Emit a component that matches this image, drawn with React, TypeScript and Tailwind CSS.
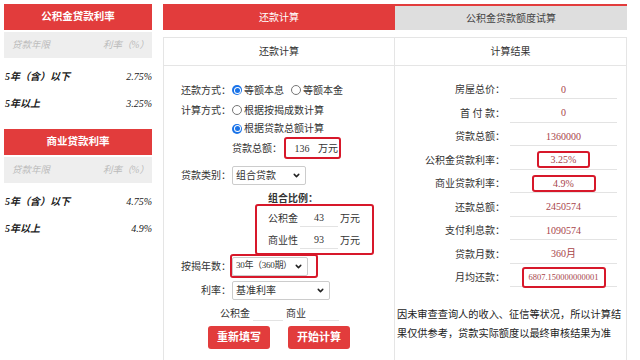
import React, {ReactNode} from 'react';
import {ChevronDown} from 'lucide-react';

const font = {fontFamily: '"Liberation Serif", "Noto Sans CJK SC", serif'};

function Radio({checked}: {checked?: boolean}) {
  return checked ? (
    <span className="flex h-[10px] w-[10px] shrink-0 items-center justify-center rounded-full bg-[#1a73e8]">
      <span className="flex h-[7px] w-[7px] items-center justify-center rounded-full bg-white">
        <span className="h-[5px] w-[5px] rounded-full bg-[#1a73e8]" />
      </span>
    </span>
  ) : (
    <span className="h-[10px] w-[10px] shrink-0 rounded-full border border-[#767676] bg-white" />
  );
}

function Select({width, children}: {width: string; children: ReactNode}) {
  return (
    <div
      className={`flex h-[19px] items-center justify-between whitespace-nowrap rounded-[2px] border border-[#cccccc] bg-white pl-[3px] pr-[4px] ${width}`}
    >
      <span>{children}</span>
      <ChevronDown size={9} strokeWidth={4} className="shrink-0 text-[#222]" />
    </div>
  );
}

function RateBlock({title, rows}: {title: string; rows: [string, string][]}) {
  return (
    <div>
      <div className="flex h-[26px] items-center justify-center bg-[#e23c3c] text-[10.5px] font-bold text-white">
        {title}
      </div>
      <div className="mt-[2px] flex h-[26px] items-center justify-between bg-[#eeeeee] pl-[8px] pr-[3px] text-[9.5px] italic text-[#bbbbbb]">
        <span>贷款年限</span>
        <span>利率（%）</span>
      </div>
      <div className="mt-[5px]">
        {rows.map(([k, v]) => (
          <div key={k} className="flex h-[27px] items-center justify-between pl-[1px] text-[10px] italic text-[#222]">
            <span className="font-semibold">{k}</span>
            <span>{v}</span>
          </div>
        ))}
      </div>
    </div>
  );
}

function ResultRow({label, value, boxW, small}: {label: string; value: string; boxW?: string; small?: boolean}) {
  return (
    <div className="flex h-[23.5px] items-center">
      <div className="w-[110px] text-right text-[#333]">{label}</div>
      <div className="ml-[5px] flex h-[19px] w-[107px] items-center justify-center border-b border-[#e3e3e3] text-[#a8444a]">
        {boxW ? (
          <div
            className={`flex h-[17px] items-center justify-center rounded-[3px] border-2 border-[#d7182a] ${boxW} ${small ? 'h-[21px] text-[8.5px]' : ''}`}
          >
            {value}
          </div>
        ) : (
          value
        )}
      </div>
    </div>
  );
}

export default function App() {
  return (
    <div className="flex h-[360px] w-[640px] gap-[11px] overflow-hidden bg-white px-[4px] pt-[4px]" style={font}>
      <div className="w-[148px] shrink-0">
        <RateBlock title="公积金贷款利率" rows={[['5年（含）以下', '2.75%'], ['5年以上', '3.25%']]} />
        <div className="mt-[12px]">
          <RateBlock title="商业贷款利率" rows={[['5年（含）以下', '4.75%'], ['5年以上', '4.9%']]} />
        </div>
      </div>

      <div className="w-[464px] shrink-0 text-[10px] text-[#333]">
        <div className="flex h-[26px]">
          <div className="flex w-[232px] items-center justify-center bg-[#e23c3c] text-white">还款计算</div>
          <div className="flex w-[232px] items-center justify-center border-t-2 border-[#e23c3c] bg-[#dedede] text-[#444]">
            公积金贷款额度试算
          </div>
        </div>

        <div className="mt-[7px] flex">
          <div className="h-[330px] w-[232px] border border-[#e5e5e5]">
            <div className="flex h-[28px] items-center justify-center border-b border-[#e5e5e5]">还款计算</div>
            <div className="pt-[14px]">
              <div className="flex h-[20px] items-center">
                <span className="w-[67px] text-right">还款方式：</span>
                <span className="ml-[1px] flex items-center gap-[2px]">
                  <Radio checked />
                  等额本息
                </span>
                <span className="ml-[7px] flex items-center gap-[2px]">
                  <Radio />
                  等额本金
                </span>
              </div>
              <div className="flex h-[20px] items-center">
                <span className="w-[67px] text-right">计算方式：</span>
                <span className="ml-[1px] flex items-center gap-[2px]">
                  <Radio />
                  根据按揭成数计算
                </span>
              </div>
              <div className="flex h-[17px] items-center pl-[68px]">
                <span className="flex items-center gap-[2px]">
                  <Radio checked />
                  根据贷款总额计算
                </span>
              </div>
              <div className="flex h-[22px] items-center pl-[68px]">
                <span>贷款总额：</span>
                <div className="ml-[2px] flex h-[22px] w-[57px] items-center rounded-[3px] border-2 border-[#d7182a]">
                  <span className="w-[32px] text-center">136</span>
                  <span>万元</span>
                </div>
              </div>
              <div className="mt-[7px] flex h-[19px] items-center">
                <span className="w-[67px] text-right">贷款类别：</span>
                <div className="ml-[1px]">
                  <Select width="w-[74px]">组合贷款</Select>
                </div>
              </div>
              <div className="ml-[104px] mt-[6px] h-[13px] font-bold">组合比例：</div>
              <div className="ml-[91px] h-[51px] w-[119px] rounded-[3px] border-2 border-[#d7182a] pl-[11px] pt-[1px]">
                {[['公积金', '43'], ['商业性', '93']].map(([k, v]) => (
                  <div key={k} className="flex h-[22px] items-center">
                    <span>{k}</span>
                    <span className="ml-[2px] flex h-[18px] w-[38px] items-center justify-center border-b border-[#e3e3e3]">{v}</span>
                    <span className="ml-[2px]">万元</span>
                  </div>
                ))}
              </div>
              <div className="mt-[-1px] flex h-[24px] items-center">
                <span className="w-[67px] text-right">按揭年数：</span>
                <div className="ml-[-1px] flex h-[24px] w-[88px] items-center rounded-[3px] border-2 border-[#d7182a]">
                  <Select width="w-[76px] text-[9px] tracking-[-0.3px]">30年（360期）</Select>
                </div>
              </div>
              <div className="mt-[3px] flex h-[19px] items-center">
                <span className="w-[67px] text-right">利率：</span>
                <div className="ml-[1px]">
                  <Select width="w-[98px]">基准利率</Select>
                </div>
              </div>
              <div className="mt-[4px] flex h-[19px] items-center pl-[56px]">
                <span>公积金</span>
                <span className="ml-[3px] h-[15px] w-[30px] border-b border-[#e3e3e3]" />
                <span className="ml-[3px]">商业</span>
                <span className="ml-[3px] h-[15px] w-[30px] border-b border-[#e3e3e3]" />
              </div>
              <div className="mt-[3px] flex gap-[18px] pl-[44px]">
                <button className="h-[23px] w-[62px] rounded-[3px] bg-[#e23c3c] text-[11px] font-bold text-white">重新填写</button>
                <button className="h-[23px] w-[62px] rounded-[3px] bg-[#e23c3c] text-[11px] font-bold text-white">开始计算</button>
              </div>
            </div>
          </div>

          <div className="h-[330px] w-[232px] border border-l-0 border-[#e5e5e5]">
            <div className="flex h-[28px] items-center justify-center border-b border-[#e5e5e5]">计算结果</div>
            <div className="pt-[12px]">
              <ResultRow label="房屋总价：" value="0" />
              <ResultRow label="首 付 款：" value="0" />
              <ResultRow label="贷款总额：" value="1360000" />
              <ResultRow label="公积金贷款利率：" value="3.25%" boxW="w-[53px]" />
              <ResultRow label="商业贷款利率：" value="4.9%" boxW="w-[64px]" />
              <ResultRow label="还款总额：" value="2450574" />
              <ResultRow label="支付利息款：" value="1090574" />
              <ResultRow label="贷款月数：" value="360月" />
              <ResultRow label="月均还款：" value="6807.150000000001" boxW="w-[84px]" small />
            </div>
            <p className="mt-[15px] whitespace-nowrap pl-[2px] text-[10.2px] leading-[19px] text-[#222]">
              因未审查查询人的收入、征信等状况，所以计算结
              <br />
              果仅供参考，贷款实际额度以最终审核结果为准
            </p>
          </div>
        </div>
      </div>
    </div>
  );
}
